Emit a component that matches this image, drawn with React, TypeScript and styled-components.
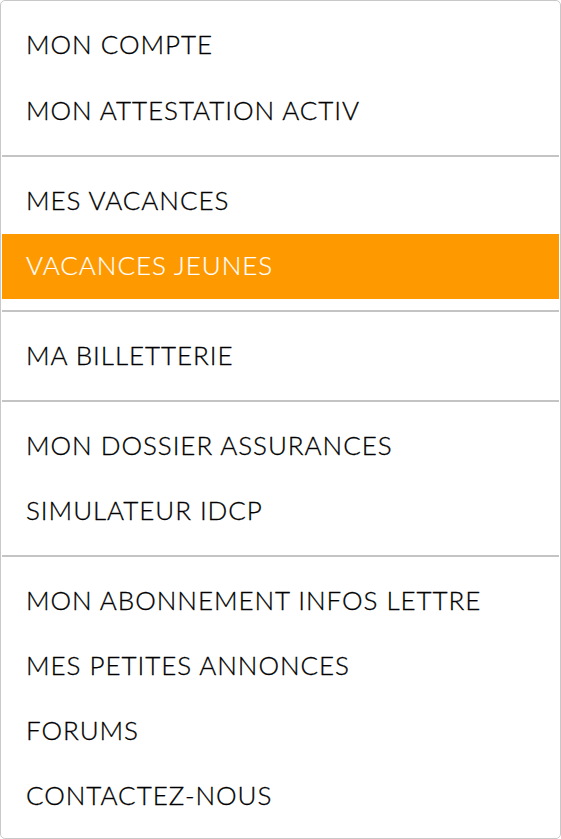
import React from "react";
import styled, { createGlobalStyle } from "styled-components";

const GlobalStyle = createGlobalStyle`
  html, body {
    margin: 0;
    padding: 0;
    background: #ffffff;
  }
  body {
    font-family: Lato, "Noto Sans", sans-serif;
  }
`;

const Menu = styled.ul`
  list-style: none;
  margin: 0;
  box-sizing: border-box;
  width: 561px;
  height: 839px;
  padding: 12.4px 1px 0;
  border: 1px solid #c8c8c8;
  border-radius: 5px;
  background: #ffffff;
  overflow: hidden;
`;

const Item = styled.li<{ $active?: boolean }>`
  box-sizing: border-box;
  height: 65.2px;
  display: flex;
  align-items: center;
  padding: 0 24px 3px;
  font-size: 26px;
  font-weight: 300;
  letter-spacing: 0.95px;
  color: ${(p) => (p.$active ? "#ffffff" : "#000000")};
  background: ${(p) => (p.$active ? "#ff9900" : "transparent")};
  white-space: nowrap;
  -webkit-text-stroke: ${(p) => (p.$active ? "0.2px #ffffff" : "0.3px #000000")};
`;

const Divider = styled.li`
  height: 2px;
  margin: 11.4px 0;
  background: #c4c4c4;
`;

type Entry = { label: string; active?: boolean } | "divider";

const entries: Entry[] = [
  { label: "MON COMPTE" },
  { label: "MON ATTESTATION ACTIV" },
  "divider",
  { label: "MES VACANCES" },
  { label: "VACANCES JEUNES", active: true },
  "divider",
  { label: "MA BILLETTERIE" },
  "divider",
  { label: "MON DOSSIER ASSURANCES" },
  { label: "SIMULATEUR IDCP" },
  "divider",
  { label: "MON ABONNEMENT INFOS LETTRE" },
  { label: "MES PETITES ANNONCES" },
  { label: "FORUMS" },
  { label: "CONTACTEZ-NOUS" },
];

export default function App() {
  return (
    <>
      <GlobalStyle />
      <Menu>
        {entries.map((e, i) =>
          e === "divider" ? (
            <Divider key={i} />
          ) : (
            <Item key={i} $active={e.active}>
              {e.label}
            </Item>
          )
        )}
      </Menu>
    </>
  );
}
